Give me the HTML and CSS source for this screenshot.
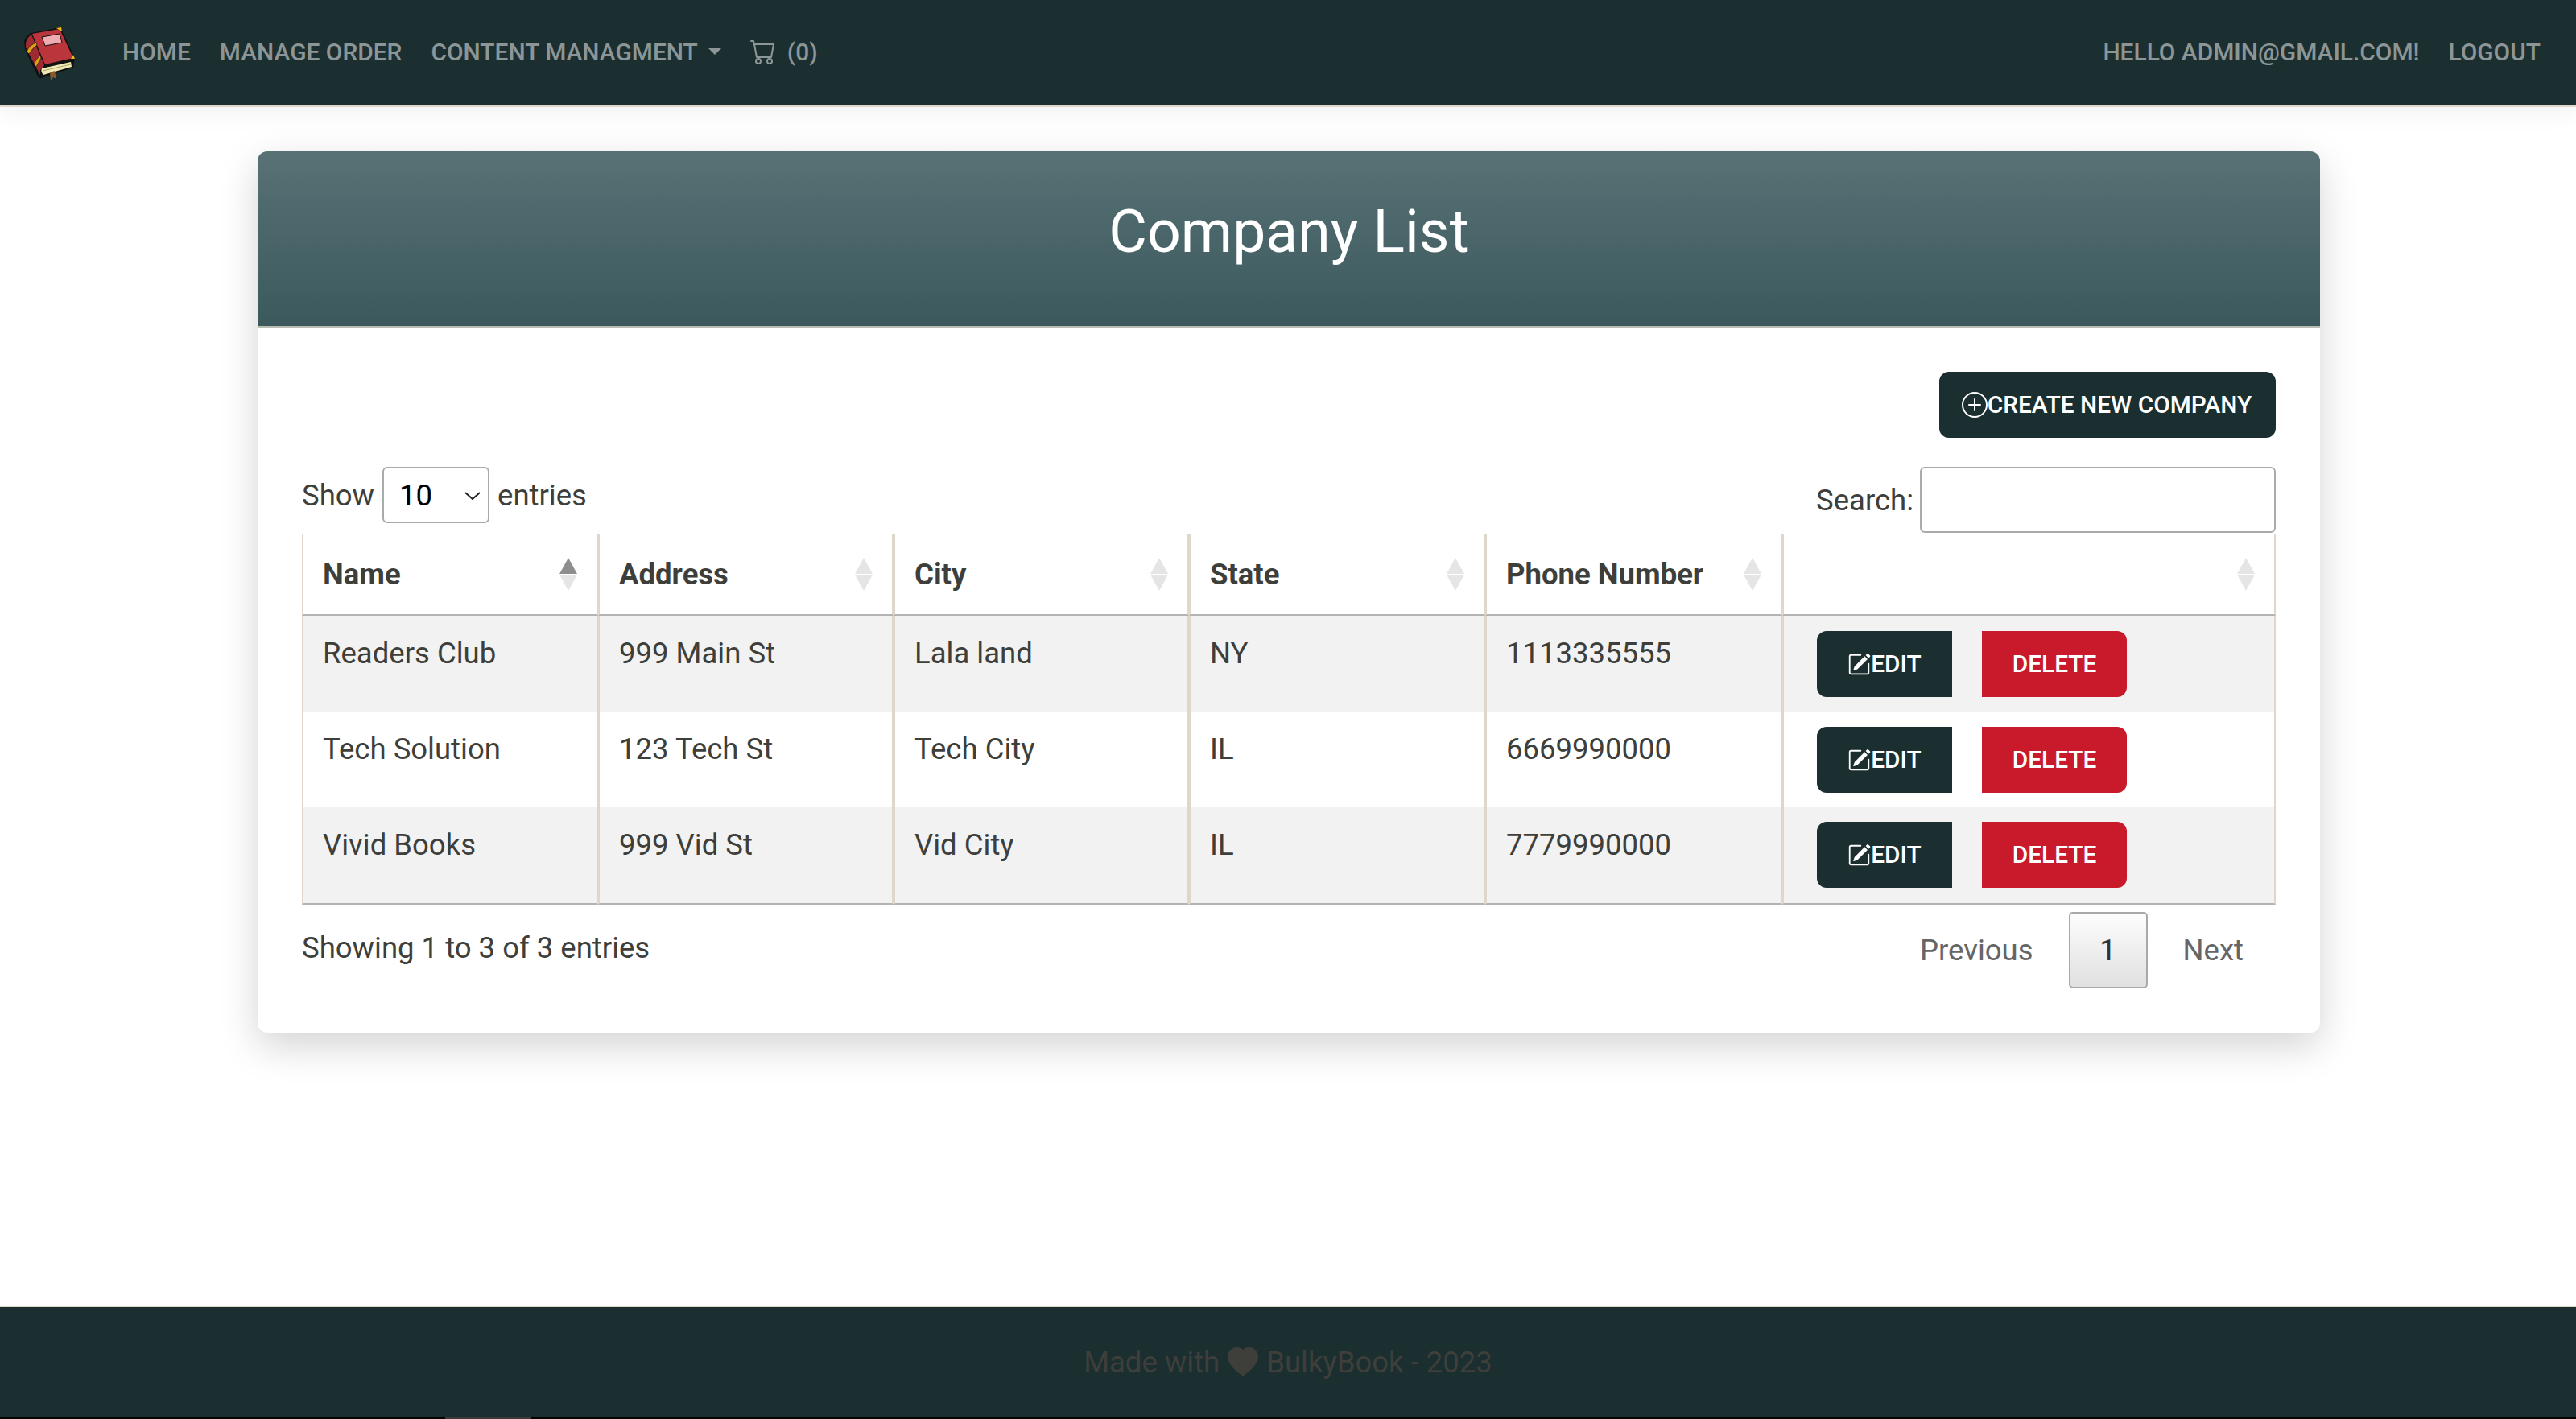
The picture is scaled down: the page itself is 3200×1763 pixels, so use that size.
FILE: index.html
```html
<!DOCTYPE html>
<html lang="en">
<head>
    <meta charset="UTF-8">
    <meta name="viewport" content="width=device-width, initial-scale=1.0">
    <title>Company List</title>
    <link rel="stylesheet" href="styles.css">
</head>
<body>

<nav class="navbar">
    <a class="brand" href="#">
        <svg class="logo" viewBox="25 28 70 76" width="70" height="76">
            <path d="M30 50 Q33 42 39 40 L75 33 L93 71 L91 83 L51 96 Q48 97 47 94 Q38 76 31 60 Z" fill="#111"/>
            <path d="M32 52 Q34 45 39 42 L55 80 L50 86 L50 92 Q41 76 32 58 Z" fill="#9e2a32"/>
            <path d="M40 41 L74 35 L91 71 L56 79 Z" fill="#bb353d"/>
            <path d="M52 84 L88 76 L89 82 L54 92 Q50 88 52 84 Z" fill="#f0e9b4"/>
            <path d="M53 87 L88 79" stroke="#a9a473" stroke-width="1" fill="none"/>
            <path d="M52 45 L74 41 L77 52 L56 56 Z" fill="#eeabb2" stroke="#111" stroke-width="1"/>
            <path d="M33 63 Q37 55 45 52 L46 55 Q40 59 36 66 Z" fill="#e0a312" stroke="#111" stroke-width=".6"/>
            <path d="M42 79 Q45 72 50 68 L51 71 Q48 76 45 82 Z" fill="#e0a312" stroke="#111" stroke-width=".6"/>
            <path d="M70 34 L76 33 L77 38 Z" fill="#f2b90f"/>
            <path d="M88 72 L91 67 L93 72 Z" fill="#f2b90f"/>
            <path d="M62 89 L68 87 L70 97 L66 95 L63 99 Z" fill="#8a5a2b"/>
        </svg>
    </a>
    <a class="nav-link" href="#">Home</a>
    <a class="nav-link" href="#">Manage Order</a>
    <a class="nav-link" href="#">Content Managment<span class="caret"></span></a>
    <a class="nav-link" href="#">
        <svg class="cart" viewBox="0 0 16 16" width="32" height="32" fill="currentColor">
            <path d="M0 1.5A.5.5 0 0 1 .5 1H2a.5.5 0 0 1 .485.379L2.89 3H14.5a.5.5 0 0 1 .491.592l-1.5 8A.5.5 0 0 1 13 12H4a.5.5 0 0 1-.491-.408L2.01 3.607 1.61 2H.5a.5.5 0 0 1-.5-.5zM3.102 4l1.313 7h8.17l1.313-7H3.102zM5 12a2 2 0 1 0 0 4 2 2 0 0 0 0-4zm7 0a2 2 0 1 0 0 4 2 2 0 0 0 0-4zm-7 1a1 1 0 1 1 0 2 1 1 0 0 1 0-2zm7 0a1 1 0 1 1 0 2 1 1 0 0 1 0-2z"/>
        </svg>
        (0)
    </a>
    <div class="nav-right">
        <a class="nav-link" href="#">Hello admin@gmail.com!</a>
        <a class="nav-link" href="#">Logout</a>
    </div>
</nav>

<main class="page">
    <div class="card">
        <div class="card-header">
            <h1>Company List</h1>
        </div>
        <div class="card-body">
            <div class="toolbar">
                <a class="btn btn-dark btn-create" href="#">
                    <svg viewBox="0 0 16 16" width="32" height="32" fill="currentColor">
                        <path d="M8 15A7 7 0 1 1 8 1a7 7 0 0 1 0 14zm0 1A8 8 0 1 0 8 0a8 8 0 0 0 0 16z"/>
                        <path d="M8 4a.5.5 0 0 1 .5.5v3h3a.5.5 0 0 1 0 1h-3v3a.5.5 0 0 1-1 0v-3h-3a.5.5 0 0 1 0-1h3v-3A.5.5 0 0 1 8 4z"/>
                    </svg>
                    Create New Company
                </a>
            </div>

            <div class="table-controls">
                <label class="length">
                    Show
                    <span class="select-wrap">
                        <select>
                            <option>10</option>
                            <option>25</option>
                            <option>50</option>
                            <option>100</option>
                        </select>
                        <svg class="chevron" viewBox="0 0 20 10" width="20" height="10">
                            <path d="M1 1 L10 9 L19 1" fill="none" stroke="#222" stroke-width="2"/>
                        </svg>
                    </span>
                    entries
                </label>
                <label class="search">
                    Search:
                    <input type="search">
                </label>
            </div>

            <table class="data">
                <thead>
                    <tr>
                        <th><div class="th-inner">Name<span class="sort sort-asc"></span></div></th>
                        <th><div class="th-inner">Address<span class="sort"></span></div></th>
                        <th><div class="th-inner">City<span class="sort"></span></div></th>
                        <th><div class="th-inner">State<span class="sort"></span></div></th>
                        <th><div class="th-inner">Phone Number<span class="sort"></span></div></th>
                        <th><div class="th-inner"><span></span><span class="sort"></span></div></th>
                    </tr>
                </thead>
                <tbody>
                    <tr class="odd">
                        <td>Readers Club</td>
                        <td>999 Main St</td>
                        <td>Lala land</td>
                        <td>NY</td>
                        <td>1113335555</td>
                        <td class="actions">
                            <div class="action-group">
                                <a class="btn btn-dark btn-edit" href="#">
                                    <svg viewBox="0 0 16 16" width="29" height="29" fill="currentColor">
                                        <path d="M15.502 1.94a.5.5 0 0 1 0 .706L14.459 3.69l-2-2L13.502.646a.5.5 0 0 1 .707 0l1.293 1.293zm-1.75 2.456-2-2L4.939 9.21a.5.5 0 0 0-.121.196l-.805 2.414a.25.25 0 0 0 .316.316l2.414-.805a.5.5 0 0 0 .196-.12l6.813-6.814z"/>
                                        <path d="M1 13.5A1.5 1.5 0 0 0 2.5 15h11a1.5 1.5 0 0 0 1.5-1.5v-6a.5.5 0 0 0-1 0v6a.5.5 0 0 1-.5.5h-11a.5.5 0 0 1-.5-.5v-11a.5.5 0 0 1 .5-.5H9a.5.5 0 0 0 0-1H2.5A1.5 1.5 0 0 0 1 2.5v11z"/>
                                    </svg>
                                    Edit
                                </a>
                                <a class="btn btn-danger" href="#">Delete</a>
                            </div>
                        </td>
                    </tr>
                    <tr>
                        <td>Tech Solution</td>
                        <td>123 Tech St</td>
                        <td>Tech City</td>
                        <td>IL</td>
                        <td>6669990000</td>
                        <td class="actions">
                            <div class="action-group">
                                <a class="btn btn-dark btn-edit" href="#">
                                    <svg viewBox="0 0 16 16" width="29" height="29" fill="currentColor">
                                        <path d="M15.502 1.94a.5.5 0 0 1 0 .706L14.459 3.69l-2-2L13.502.646a.5.5 0 0 1 .707 0l1.293 1.293zm-1.75 2.456-2-2L4.939 9.21a.5.5 0 0 0-.121.196l-.805 2.414a.25.25 0 0 0 .316.316l2.414-.805a.5.5 0 0 0 .196-.12l6.813-6.814z"/>
                                        <path d="M1 13.5A1.5 1.5 0 0 0 2.5 15h11a1.5 1.5 0 0 0 1.5-1.5v-6a.5.5 0 0 0-1 0v6a.5.5 0 0 1-.5.5h-11a.5.5 0 0 1-.5-.5v-11a.5.5 0 0 1 .5-.5H9a.5.5 0 0 0 0-1H2.5A1.5 1.5 0 0 0 1 2.5v11z"/>
                                    </svg>
                                    Edit
                                </a>
                                <a class="btn btn-danger" href="#">Delete</a>
                            </div>
                        </td>
                    </tr>
                    <tr class="odd">
                        <td>Vivid Books</td>
                        <td>999 Vid St</td>
                        <td>Vid City</td>
                        <td>IL</td>
                        <td>7779990000</td>
                        <td class="actions">
                            <div class="action-group">
                                <a class="btn btn-dark btn-edit" href="#">
                                    <svg viewBox="0 0 16 16" width="29" height="29" fill="currentColor">
                                        <path d="M15.502 1.94a.5.5 0 0 1 0 .706L14.459 3.69l-2-2L13.502.646a.5.5 0 0 1 .707 0l1.293 1.293zm-1.75 2.456-2-2L4.939 9.21a.5.5 0 0 0-.121.196l-.805 2.414a.25.25 0 0 0 .316.316l2.414-.805a.5.5 0 0 0 .196-.12l6.813-6.814z"/>
                                        <path d="M1 13.5A1.5 1.5 0 0 0 2.5 15h11a1.5 1.5 0 0 0 1.5-1.5v-6a.5.5 0 0 0-1 0v6a.5.5 0 0 1-.5.5h-11a.5.5 0 0 1-.5-.5v-11a.5.5 0 0 1 .5-.5H9a.5.5 0 0 0 0-1H2.5A1.5 1.5 0 0 0 1 2.5v11z"/>
                                    </svg>
                                    Edit
                                </a>
                                <a class="btn btn-danger" href="#">Delete</a>
                            </div>
                        </td>
                    </tr>
                </tbody>
            </table>

            <div class="table-footer">
                <div class="info">Showing 1 to 3 of 3 entries</div>
                <div class="paginate">
                    <a class="page-btn" href="#">Previous</a>
                    <a class="page-btn current" href="#">1</a>
                    <a class="page-btn" href="#">Next</a>
                </div>
            </div>
        </div>
    </div>
</main>

<footer class="footer">
    Made with
    <svg class="heart" viewBox="0 0 16 16" width="38" height="38" fill="currentColor">
        <path d="M8 1.314C12.438-3.248 23.534 4.735 8 15-7.534 4.736 3.562-3.248 8 1.314z"/>
    </svg>
    BulkyBook - 2023
</footer>
<div class="edge"><span class="edge-mark"></span></div>

</body>
</html>
```

FILE: styles.css
```css
* {
    box-sizing: border-box;
}
html, body {
    height: 100%;
}
body {
    margin: 0;
    display: flex;
    flex-direction: column;
    font-family: Roboto, "Liberation Sans", sans-serif;
    font-size: 36.5px;
    line-height: 55px;
    color: #3e3f3a;
    background: #fff;
}
a {
    text-decoration: none;
}

/* navbar */
.navbar {
    position: relative;
    z-index: 1;
    flex: none;
    display: flex;
    align-items: center;
    height: 133px;
    padding: 0 26px 0 25px;
    background: #1b2e30;
    border-bottom: 2px solid #dfd7ca;
    box-shadow: 0 2px 32px rgba(0, 0, 0, 0.08);
}
.brand {
    display: flex;
    margin-right: 39px;
    padding-top: 2px;
}
.nav-link {
    display: flex;
    align-items: center;
    padding: 0 18px 3px;
    font-size: 29.9px;
    font-weight: 500;
    line-height: 45px;
    text-transform: uppercase;
    color: rgba(255, 255, 255, 0.5);
}
.caret {
    width: 0;
    height: 0;
    margin-left: 13px;
    border-top: 8px solid currentColor;
    border-left: 8px solid transparent;
    border-right: 8px solid transparent;
}
.cart {
    margin-right: 14px;
}
.nav-right {
    display: flex;
    margin-left: auto;
}

/* card */
.page {
    flex: 1;
    padding: 55px 318px 0 320px;
}
.card {
    border-radius: 12px;
    background: #fff;
    box-shadow: 0 16px 48px rgba(0, 0, 0, 0.175);
}
.card-header {
    height: 219px;
    padding-bottom: 16px;
    border-bottom: 2px solid #b9bdb2;
    border-radius: 12px 12px 0 0;
    background: #3b595d linear-gradient(180deg, rgba(255, 255, 255, 0.15), rgba(255, 255, 255, 0));
    display: flex;
    align-items: center;
    justify-content: center;
}
.card-header h1 {
    margin: 0;
    font-size: 73.3px;
    font-weight: 400;
    line-height: 1.2;
    color: #fff;
}
.card-body {
    padding: 55px 55px 55px;
}
.toolbar {
    display: flex;
    justify-content: flex-end;
    margin-bottom: 36px;
}

/* buttons */
.btn {
    display: inline-flex;
    align-items: center;
    justify-content: center;
    height: 82px;
    padding-bottom: 2px;
    font-size: 29.8px;
    font-weight: 500;
    text-transform: uppercase;
    color: #fff;
}
.btn svg {
    margin-top: 2px;
}
.btn-dark {
    background: #1b2e30;
    border-radius: 12px;
}
.btn-create {
    width: 418px;
    padding-right: 2px;
}
.btn-edit {
    width: 168px;
    border-radius: 12px 0 0 12px;
}
.btn-danger {
    width: 180px;
    background: #c91a2b;
    border-radius: 0 12px 12px 0;
}

/* show / search */
.table-controls {
    display: flex;
    justify-content: space-between;
    align-items: flex-start;
    height: 83px;
}
.length {
    display: flex;
    align-items: center;
    gap: 10px;
}
.select-wrap {
    position: relative;
    display: flex;
}
.select-wrap select {
    appearance: none;
    width: 133px;
    height: 70px;
    padding: 0 0 0 19px;
    font: inherit;
    color: #000;
    background: #fff;
    border: 2px solid #aaa;
    border-radius: 6px;
}
.chevron {
    position: absolute;
    top: 31px;
    right: 11px;
    pointer-events: none;
}
.search {
    display: flex;
    align-items: center;
    gap: 8px;
}
.search input {
    width: 442px;
    height: 82px;
    border: 2px solid #aaa;
    border-radius: 6px;
    background: #fff;
}

/* table */
.data {
    width: 100%;
    table-layout: fixed;
    border-collapse: separate;
    border-spacing: 0;
}
.data th,
.data td {
    border-left: 2px solid #dfd7ca;
    border-right: 2px solid #dfd7ca;
    padding: 0 24px;
    text-align: left;
}
.data th:nth-child(1) { width: 368px; }
.data th:nth-child(2) { width: 367px; }
.data th:nth-child(3) { width: 367px; }
.data th:nth-child(4) { width: 368px; }
.data th:nth-child(5) { width: 369px; }
.data th {
    height: 102px;
    font-weight: 700;
    border-bottom: 2px solid #b3b3b3;
}
.th-inner {
    display: flex;
    align-items: center;
    justify-content: space-between;
}
.data td {
    height: 119px;
    padding-top: 19px;
    vertical-align: top;
}
.data tr.odd td {
    background: #f2f2f2;
}
.data tbody tr:last-child td {
    height: 121px;
    border-bottom: 2px solid #b3b3b3;
}
.sort {
    flex: none;
    display: flex;
    flex-direction: column;
    gap: 1px;
}
.sort::before,
.sort::after {
    content: "";
    width: 0;
    height: 0;
    border-left: 11px solid transparent;
    border-right: 11px solid transparent;
}
.sort::before {
    border-bottom: 20px solid #e5e5e5;
}
.sort::after {
    border-top: 20px solid #e5e5e5;
}
.sort-asc::before {
    border-bottom-color: #8e8e8e;
}
.data td.actions {
    padding: 19px 0 0 41px;
}
.data tbody tr:last-child td.actions {
    padding-top: 18px;
}
.action-group {
    display: flex;
    gap: 37px;
}

/* info + paging */
.table-footer {
    display: flex;
    justify-content: space-between;
    align-items: flex-start;
}
.info {
    padding-top: 26px;
}
.paginate {
    display: flex;
    gap: 4px;
    margin-top: 9px;
}
.page-btn {
    display: flex;
    align-items: center;
    justify-content: center;
    height: 95px;
    padding: 0 38px;
    color: #666;
    border: 2px solid transparent;
    border-radius: 5px;
}
.page-btn.current {
    width: 98px;
    padding: 0;
    color: #333;
    border-color: #a9a9a9;
    background: linear-gradient(to bottom, #fdfdfd 0%, #e0e0e0 100%);
}

/* footer */
.footer {
    flex: none;
    display: flex;
    align-items: center;
    justify-content: center;
    gap: 10px;
    height: 139px;
    color: #3e3f3a;
    background: #1b2e30;
    border-top: 2px solid #dfd7ca;
}
.edge {
    flex: none;
    height: 2px;
    background: #000;
}
.edge-mark {
    display: block;
    width: 107px;
    height: 2px;
    margin-left: 553px;
    background: #3a3a3a;
}
```
